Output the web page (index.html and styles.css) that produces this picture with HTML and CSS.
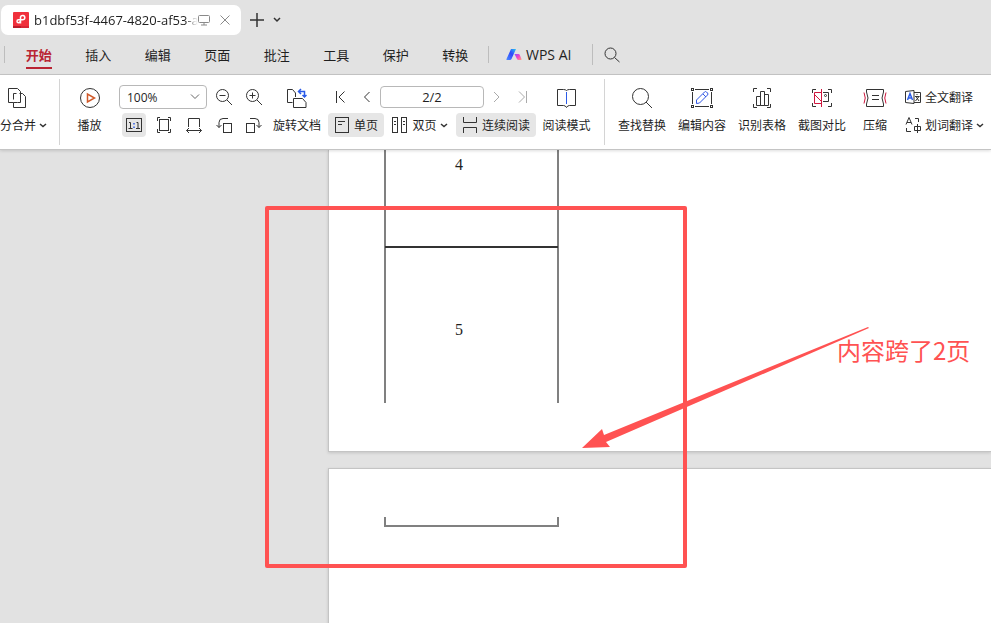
FILE: index.html
```html
<!DOCTYPE html>
<html lang="zh-CN">
<head>
<meta charset="utf-8">
<title>WPS PDF</title>
<link rel="stylesheet" href="styles.css">
</head>
<body>
<header class="header">
  <div class="tabs">
    <div class="tab">
      <svg class="logo" width="16" height="16" viewBox="0 0 16 16"><rect width="16" height="16" rx="1" fill="#f0303c"/><path d="M0 14h8v2H0z" fill="#b91c2b"/><path d="M8 14h8v2H8z" fill="#d92635"/><path d="M7.500 11.500V5a2.200 2.200 0 1 1 2.200 2.800H5.500a1.500 1.500 0 1 0 1.500 1.500" fill="none" stroke="#fff" stroke-width="1.500"/></svg>
      <span class="tab-name">b1dbf53f-4467-4820-af53-a</span>
      <svg width="12" height="12" viewBox="0 0 12 12" class="line soft"><rect x=".5" y="1.500" width="11" height="7" rx="1"/><path d="M6 9v2M3 11h6"/></svg>
      <button class="plain close" aria-label="关闭"><svg width="10" height="10" viewBox="0 0 10 10" class="line soft"><path d="M.5.5l9 9M9.500.5l-9 9"/></svg></button>
    </div>
    <button class="plain add" aria-label="新建"><svg width="14" height="14" viewBox="0 0 14 14" class="line thick"><path d="M7 0v14M0 7h14"/></svg></button>
    <button class="plain" aria-label="标签列表"><svg width="8" height="6" viewBox="0 0 8 6" class="line thick"><path d="M1 1l3 3 3-3"/></svg></button>
  </div>
  <div class="menubar">
    <span class="sep"></span>
    <nav class="menu">
      <a class="active" href="#start">开始</a><a href="#insert">插入</a><a href="#edit">编辑</a><a href="#page">页面</a><a href="#comment">批注</a><a href="#tools">工具</a><a href="#protect">保护</a><a href="#convert">转换</a>
    </nav>
    <span class="sep"></span>
    <a class="ai" href="#ai">
      <svg width="16" height="12" viewBox="0 0 16 12"><defs><linearGradient id="blue" x1="1" y1="0" x2="0" y2="1"><stop offset="0" stop-color="#25c8f4"/><stop offset=".45" stop-color="#3048fb"/><stop offset="1" stop-color="#4c8cff"/></linearGradient><linearGradient id="pink" x1="0" y1="0" x2="1" y2="1"><stop offset="0" stop-color="#8b4dff"/><stop offset=".5" stop-color="#f545c5"/><stop offset="1" stop-color="#ffa77c"/></linearGradient></defs><path d="M5 0h5L5.500 10Q5 11 4 11H1Q0 11 .5 10z" fill="url(#blue)"/><path d="M8.500 5h4q1 0 1.300 1l1.700 4q.3 1-.5 1h-2.500q-1 0-1.500-1z" fill="url(#pink)"/></svg>
      <span>WPS AI</span>
    </a>
    <span class="sep tall"></span>
    <button class="plain search" aria-label="搜索"><svg width="16" height="16" viewBox="0 0 16 16" class="line"><circle cx="6.500" cy="6.500" r="5.500"/><path d="M10.500 10.500l5 4.500"/></svg></button>
  </div>
</header>

<div class="toolbar">
  <button class="tool split"><svg width="20" height="22" viewBox="0 0 20 22" class="line"><path d="M13.500 4.500l-3-3h-9v14h5M6.500 12.500v-6h3M10.500 15.500h-4v5h12v-11l-3-3h-3M13.500 4.500v11h-3"/></svg><span>分合并<svg class="caret line" width="8" height="5" viewBox="0 0 8 5"><path d="M1 1l3 2.500L7 1"/></svg></span></button>
  <span class="rule"></span>
  <button class="tool play"><svg width="22" height="22" viewBox="0 0 22 22" class="line"><circle cx="11" cy="11" r="9.500"/><path d="M8.500 7v8l7-4z" stroke="#d05a2a" stroke-width="1.500"/></svg><span>播放</span></button>

  <div class="stack view">
    <div class="row">
      <div class="zoom"><select aria-label="缩放"><option>100%</option></select><svg width="10" height="6" viewBox="0 0 10 6" class="line mid"><path d="M1 .5l4 4 4-4"/></svg></div>
      <button class="icon" aria-label="缩小"><svg width="18" height="18" viewBox="0 0 18 18" class="line"><circle cx="7.500" cy="7.500" r="6"/><path d="M12 12l5 5M4.500 7.500h6"/></svg></button>
      <button class="icon" aria-label="放大"><svg width="18" height="18" viewBox="0 0 18 18" class="line"><circle cx="7.500" cy="7.500" r="6"/><path d="M12 12l5 5M4.500 7.500h6M7.500 4.500v6"/></svg></button>
    </div>
    <div class="row sizes">
      <button class="icon on" aria-label="实际大小"><svg width="16" height="16" viewBox="0 0 16 16" class="line"><rect x=".5" y="1.500" width="15" height="13"/><path d="M3 5.500h1.500v6M2.500 11.500h4M10.500 5.500H12v6M10 11.500h4"/><path d="M8 6v1.500M8 9.500V11" stroke="#2b5be8" stroke-width="1.500"/></svg></button>
      <button class="icon" aria-label="适合页面"><svg width="16" height="16" viewBox="0 0 16 16" class="line"><rect x="3.500" y="2.500" width="9" height="11"/><path d="M1.500 4V.5H4M12 .5h2.500V4M1.500 12v3.500H4M12 15.500h2.500V12"/></svg></button>
      <button class="icon" aria-label="适合宽度"><svg width="16" height="16" viewBox="0 0 16 16" class="line"><path d="M2.500 10V1.500h11V10M.5 13.500h15M3 11L.5 13.500 3 16M13 11l2.500 2.500L13 16"/></svg></button>
      <button class="icon" aria-label="向左旋转"><svg width="16" height="16" viewBox="0 0 16 16" class="line"><rect x="7.500" y="6.500" width="8" height="9"/><path d="M12 1.500H7q-4 0-4 4v5M.5 8L3 10.500 5.500 8"/></svg></button>
      <button class="icon" aria-label="向右旋转"><svg width="16" height="16" viewBox="0 0 16 16" class="line"><rect x=".5" y="6.500" width="8" height="9"/><path d="M4 1.500h5q4 0 4 4v5M10.500 8l2.500 2.500L15.500 8"/></svg></button>
    </div>
  </div>

  <button class="tool rotate"><svg width="20" height="20" viewBox="0 0 20 20" class="line"><path d="M5.500 14.500h-5V1.500h5l3 3.500v4M6.500 19.500v-9h9l3.500 4v5z"/><path d="M11.500 3.500h6v5.500M14 1l-2.500 2.500L14 6M15.500 7l2 2 2-2" stroke="#2b5be8" stroke-width="1.500"/></svg><span>旋转文档</span></button>

  <div class="stack pages">
    <div class="row pager">
      <button class="icon" aria-label="第一页"><svg width="10" height="12" viewBox="0 0 10 12" class="line"><path d="M.5 0v12M8.500.5L3 6l5.500 5.500"/></svg></button>
      <button class="icon" aria-label="上一页"><svg width="8" height="12" viewBox="0 0 8 12" class="line"><path d="M6.500 1l-5 5 5 5"/></svg></button>
      <input class="pageno" type="text" value="2/2" aria-label="页码">
      <button class="icon" aria-label="下一页"><svg width="8" height="12" viewBox="0 0 8 12" class="line faint"><path d="M1 1l5 5-5 5"/></svg></button>
      <button class="icon" aria-label="最后一页"><svg width="10" height="12" viewBox="0 0 10 12" class="line faint"><path d="M8.500 0v12M1 .5L6.500 6 1 11.500"/></svg></button>
    </div>
    <div class="row modes">
      <button class="mode on"><svg width="16" height="16" viewBox="0 0 16 16" class="line"><rect x="1.500" y=".5" width="13" height="15"/><path d="M4 4.500h7M4 7.500h4"/></svg>单页</button>
      <button class="mode"><svg width="16" height="16" viewBox="0 0 16 16" class="line"><rect x=".5" y=".5" width="5" height="15"/><rect x="9.500" y=".5" width="5" height="15"/><path d="M2 4.500h2M2 7.500h2M11 4.500h2M11 7.500h2"/></svg>双页<svg class="caret line" width="8" height="5" viewBox="0 0 8 5"><path d="M1 1l3 2.500L7 1"/></svg></button>
      <button class="mode on"><svg width="16" height="16" viewBox="0 0 16 16" class="line"><path d="M1.500 0v5.500h13V0M1.500 16v-5.500h13V16"/></svg>连续阅读</button>
    </div>
  </div>

  <button class="tool read"><svg width="20" height="20" viewBox="0 0 20 20" class="line"><path d="M9.500 2.500Q8.500 1.500 6.500 1.500h-6v16h6q2 0 3 2 1-2 3-2h6v-16h-6q-2 0-3 1"/><path d="M9.500 4v12" stroke="#2b5be8"/></svg><span>阅读模式</span></button>
  <span class="rule"></span>

  <button class="tool"><svg width="22" height="22" viewBox="0 0 22 22" class="line"><circle cx="9.500" cy="9.500" r="8"/><path d="M15 15l6 6"/></svg><span>查找替换</span></button>
  <button class="tool"><svg width="22" height="22" viewBox="0 0 22 22" class="line"><rect x=".5" y="1.500" width="2" height="2"/><rect x="19.500" y="1.500" width="2" height="2"/><rect x=".5" y="18.500" width="2" height="2"/><rect x="19.500" y="18.500" width="2" height="2"/><path d="M4 2.500h14M4 19.500h14M1.500 5v12M20.500 5v12"/><path d="M5.500 16.500V13l8-8q1-1 2 0l1 1q1 1 0 2l-8 8zM12 7l3 3" stroke="#3056e5"/></svg><span>编辑内容</span></button>
  <button class="tool"><svg width="20" height="22" viewBox="0 0 20 22" class="line"><path d="M1.500 5V1.500H5M15 1.500h3.500V5M1.500 17v3.500H5M15 20.500h3.500V17M4.500 18.500v-9h4v9zM8.500 18.500v-14h4v14zM12.500 18.500v-11h4v11z"/></svg><span>识别表格</span></button>
  <button class="tool"><svg width="22" height="22" viewBox="0 0 22 22" class="line"><path d="M1.500 6V2.500H5M17 2.500h3.500V6M1.500 16v3.500H5M17 19.500h3.500V16M12 5.500h5.500v9H12"/><circle cx="14.500" cy="8.500" r="1"/><path d="M10.500 2v18M10 5.500H3.500v11H10M4 8l6 6" stroke="#cf173e"/></svg><span>截图对比</span></button>
  <button class="tool narrow"><svg width="24" height="22" viewBox="0 0 24 22" class="line"><path d="M3.500 5V2.500h17V5M3.500 17v2.500h17V17M3.500 5q3 6 0 12M20.500 5q-3 6 0 12M9 8.500h7M9 12.500h7"/><path d="M1 5.500q2.500 5.500 0 11M23 5.500q-2.500 5.500 0 11" stroke="#cf173e"/></svg><span>压缩</span></button>

  <div class="stack translate">
    <button class="mode"><svg width="16" height="16" viewBox="0 0 16 16" class="line"><path d="M9 1.500l-8.500 1v11l8.500 1zM9 3.500h6.500v10H9M12 5v1M10 7.500h4.500M11 7.500l3 4.500M14 7.500L10.500 12"/><path d="M2.500 11L5 4.500 7.500 11M3.500 9h3" stroke="#2b5be8" stroke-width="1.500"/></svg>全文翻译</button>
    <button class="mode"><svg width="16" height="16" viewBox="0 0 16 16" class="line"><path d="M1 7.500L4 .5l3 7M2 5.500h4M10 1.500h3.500V5M1.500 11v3.500H6M9.500 9.500v4h6v-4zM12.500 7v9"/></svg>划词翻译<svg class="caret line" width="8" height="5" viewBox="0 0 8 5"><path d="M1 1l3 2.500L7 1"/></svg></button>
  </div>
</div>

<main class="canvas">
  <section class="page first">
    <div class="grid">
      <div class="cell four">4</div>
      <div class="cell five">5</div>
    </div>
  </section>
  <section class="page second">
    <div class="grid tail"></div>
  </section>
  <div class="frame"></div>
  <svg class="arrow" width="288" height="122" viewBox="0 0 288 122"><path d="M0 121L20 102l2 6L286 0l1 1L24 115l4 5z" fill="#ff5252"/></svg>
  <p class="note">内容跨了2页</p>
</main>
</body>
</html>
```
FILE: styles.css
```css
* { box-sizing: border-box; }

body {
  margin: 0;
  height: 100vh;
  display: flex;
  flex-direction: column;
  overflow: hidden;
  background: #e2e2e2;
  color: #1f1f1f;
  font: 12px/24px "Noto Sans CJK SC", sans-serif;
}

button, input, select { font: inherit; color: inherit; }
button { border: 0; padding: 0; background: none; white-space: nowrap; }
a { color: inherit; text-decoration: none; }
svg { display: block; flex: none; }

.line { fill: none; stroke: #333; stroke-width: 1; }
.thick { stroke-width: 1.5; }
.soft { stroke: #8a8a8a; }
.mid { stroke: #666; }
.faint { stroke: #aaa; }

.header { flex: none; border-bottom: 1px solid #c6c6c6; }

.tabs { display: flex; align-items: center; padding: 5px 0 0 1px; }
.tab {
  display: flex;
  align-items: center;
  width: 240px;
  height: 30px;
  padding: 0 11px 0 12px;
  border-radius: 7px;
  background: #fff;
}
.tab-name {
  flex: 1;
  min-width: 0;
  margin-left: 5px;
  white-space: nowrap;
  font-family: "Open Sans", sans-serif;
  font-size: 13px;
  mask-image: linear-gradient(to right, #000 92%, transparent);
}
.close { margin-left: 10px; }
.add { margin: 0 9px 0 9px; }

.menubar { display: flex; align-items: center; height: 39px; padding: 0 0 0 4px; }
.sep { width: 1px; height: 17px; background: #bdbdbd; }
.sep.tall { height: 21px; margin-left: 21px; }
.menu { display: grid; grid-template-columns: repeat(8, 1fr); width: 476px; margin: 0 3px 0 4px; font-size: 13px; }
.menu a { justify-self: center; border-bottom: 2px solid transparent; border-top: 2px solid transparent; line-height: 24px; }
.menu .active { color: #b92533; font-weight: bold; border-bottom-color: #b92533; }
.ai { display: flex; align-items: center; gap: 4px; margin-left: 17px; font: 14px/24px "Open Sans", sans-serif; }
.search { margin-left: 11px; }

.toolbar {
  display: flex;
  flex: none;
  align-items: flex-start;
  height: 75px;
  padding-top: 10px;
  background: #fff;
  border-bottom: 1px solid #c4c4c4;
  position: relative;
  z-index: 1;
  box-shadow: 0 1px 3px #0002;
}
.rule { width: 1px; height: 66px; margin-top: -6px; background: #d4d4d4; }

.tool {
  display: flex;
  flex: none;
  flex-direction: column;
  align-items: center;
  width: 60px;
  gap: 4px;
}
.tool > svg { margin: 2px 0 0; height: 22px; }
.tool > span { display: flex; align-items: center; height: 24px; }
.caret { margin-left: 3px; stroke-width: 1.5; }
.split { width: 59px; align-items: flex-start; }
.split > svg { margin-left: 7px; }
.play { width: 59px; }
.read { width: 61px; margin-right: 7px; }
.rule + .tool:not(.play) { margin-left: 7px; }
.narrow { width: 46px; }

.stack { display: flex; flex: none; flex-direction: column; gap: 4px; }
.row { display: flex; align-items: center; height: 24px; }
.icon { display: grid; place-items: center; flex: none; width: 24px; height: 24px; border-radius: 4px; }
.on { background: #e6e6e6; }

.view { width: 148px; }
.view .row:first-child { gap: 6px; }
.view .icon:nth-child(2) { margin-left: -1px; }
.sizes { gap: 6px; padding-left: 3px; }
.sizes .icon:nth-child(2) { margin-left: 0; }
.zoom { position: relative; width: 88px; height: 24px; }
.zoom select {
  width: 100%;
  height: 100%;
  padding: 0 7px;
  appearance: none;
  border: 1px solid #b8b8b8;
  border-radius: 4px;
  background: #fff;
  font-family: "Open Sans", sans-serif;
}
.zoom svg { position: absolute; right: 7px; top: 9px; pointer-events: none; }

.pages { width: 208px; margin-left: 1px; }
.pager .icon { width: 26px; }
.pageno {
  width: 104px;
  height: 22px;
  padding: 0;
  border: 1px solid #b8b8b8;
  border-radius: 4px;
  text-align: center;
  font-family: "Open Sans", sans-serif;
  font-size: 13px;
}
.modes { justify-content: space-between; }
.mode { display: flex; align-items: center; height: 24px; border-radius: 4px; }
.mode > svg:first-child { margin-right: 4px; }
.modes .mode.on { padding: 0 6px; }

.translate { margin-left: 7px; }

.canvas { position: relative; flex: 1; min-height: 0; overflow: hidden; }
.page {
  margin-left: 328px;
  padding-left: 55px;
  background: #fff;
  border: 1px solid #c4c4c4;
  border-right: 0;
  box-shadow: 0 1px 3px #0002;
}
.first { height: 302px; border-top: 0; }
.second { height: 180px; margin-top: 16px; padding-top: 48px; }
.grid { width: 175px; border: solid #808080; border-width: 0 2px; font: 16px/24px "Liberation Serif", serif; }
.cell { margin: 0 -1px; padding-left: 70px; }
.four { height: 98px; padding-top: 3px; border-bottom: 2px solid #333; }
.five { height: 155px; padding-top: 70px; }
.tail { height: 10px; border-bottom-width: 2px; }

.frame { position: absolute; left: 265px; top: 56px; width: 422px; height: 362px; border: 4px solid #ff5252; border-radius: 2px; }
.arrow { position: absolute; left: 582px; top: 177px; }
.note { position: absolute; left: 837px; top: 182px; margin: 0; color: #ff5252; font-size: 24px; line-height: 36px; white-space: nowrap; }
```
